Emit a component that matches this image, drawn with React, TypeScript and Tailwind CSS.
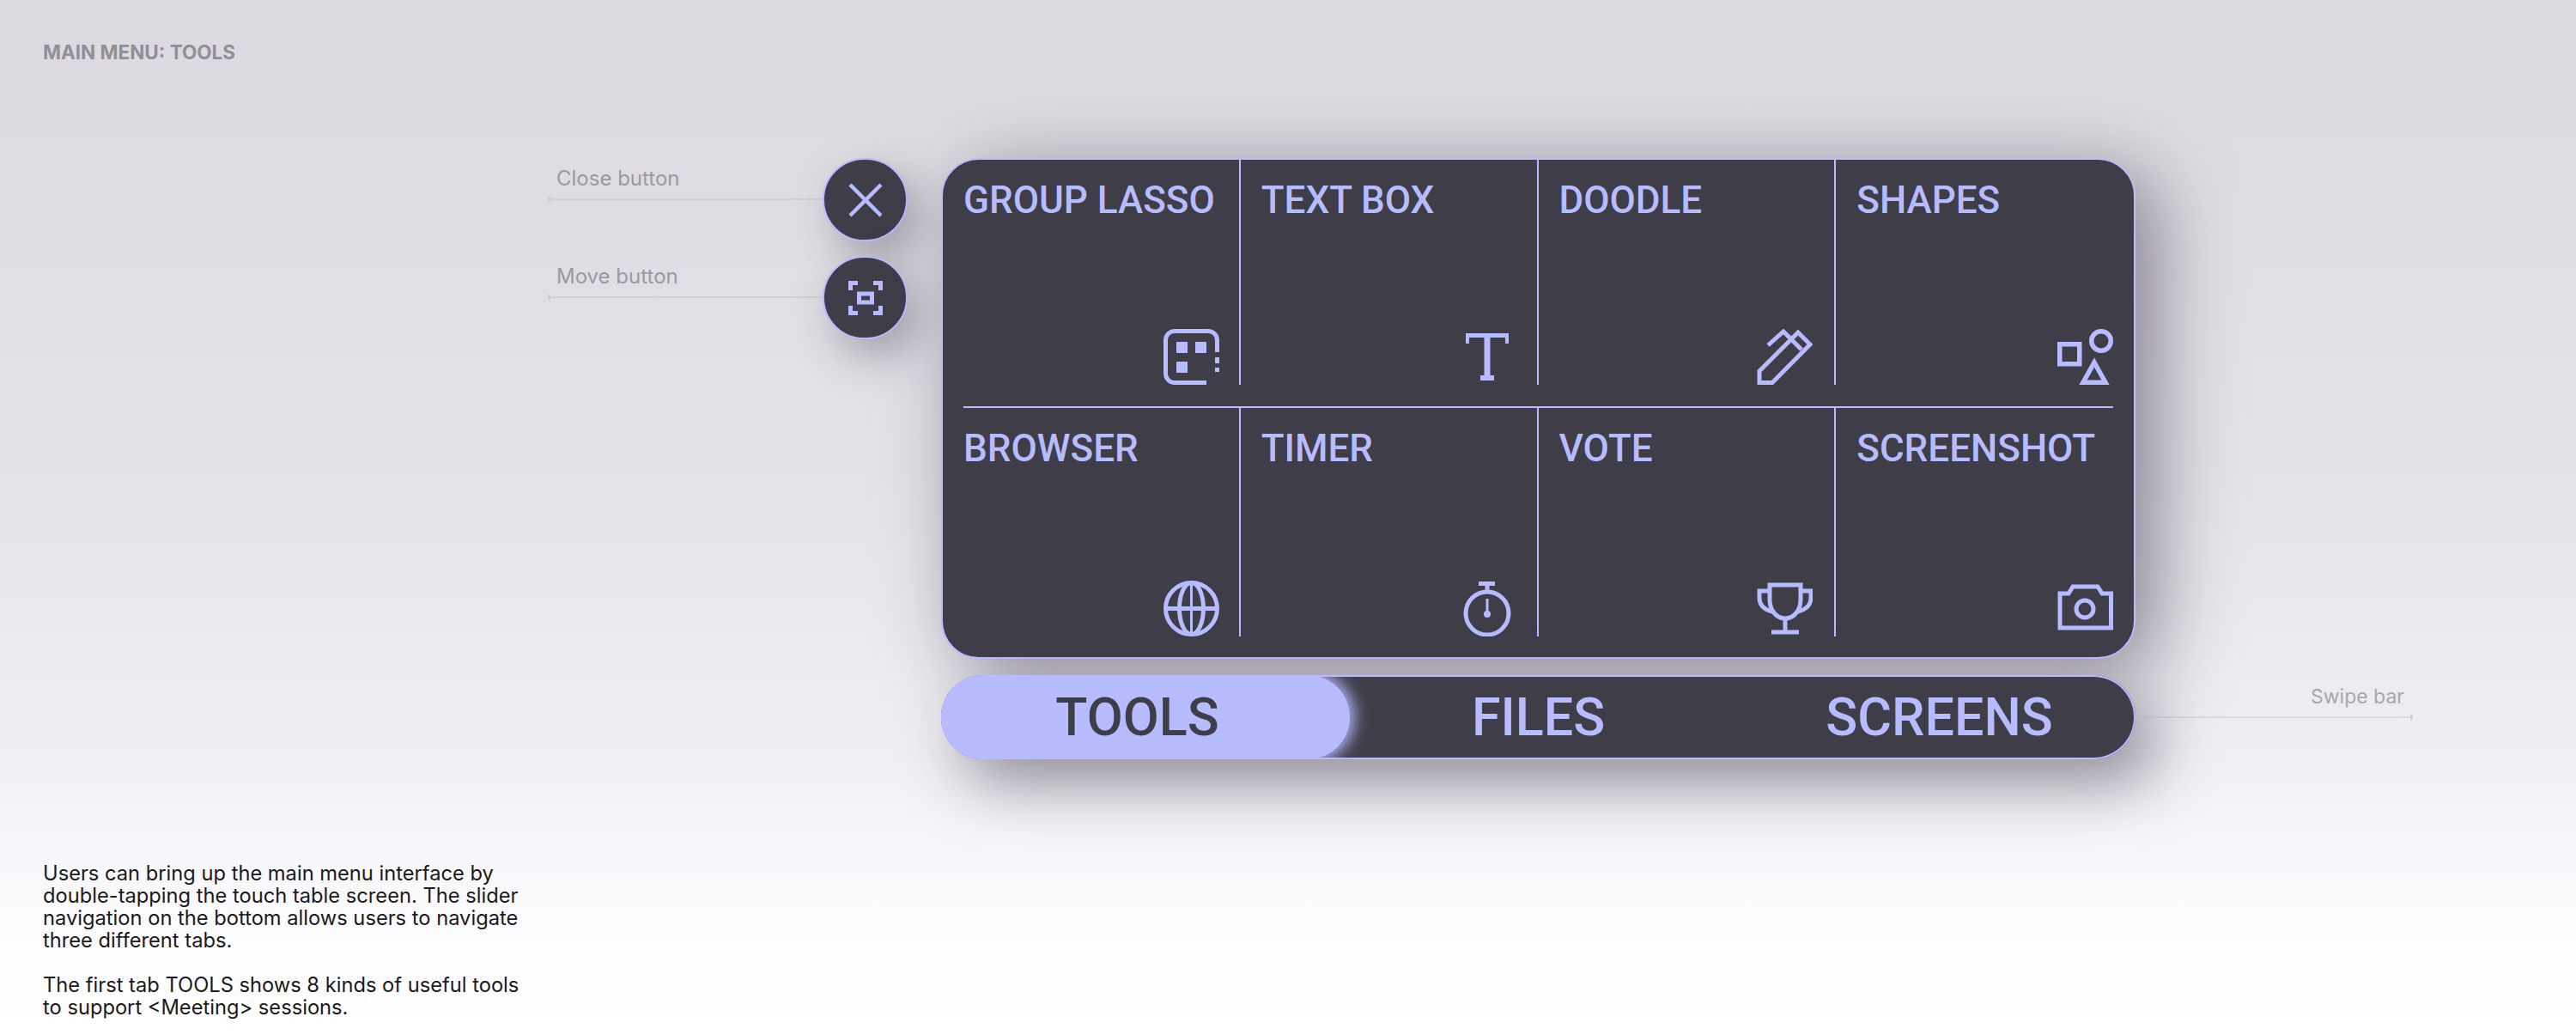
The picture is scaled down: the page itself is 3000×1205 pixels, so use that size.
const LILAC = "#b7bbff"

const LassoIcon = () => (
  <svg width="65" height="65" viewBox="0 0 65 65" fill="none" stroke={LILAC} strokeWidth="5">
    <path d="M50 62.500H13A10.500 10.500 0 0 1 2.500 52V13A10.500 10.500 0 0 1 13 2.500H52A10.500 10.500 0 0 1 62.500 13V27" />
    <g fill={LILAC} stroke="none">
      <rect x="15" y="15" width="13" height="13" />
      <rect x="37" y="15" width="13" height="13" />
      <rect x="15" y="38" width="13" height="13" />
      <rect x="60" y="33" width="5" height="7" />
      <rect x="60" y="45" width="5" height="5" />
    </g>
  </svg>
)

const SerifTIcon = () => (
  <svg width="65" height="65" viewBox="0 0 65 65" fill={LILAC}>
    <path d="M7 5H57V17H53V10H35.500V54H40V60H24V54H28.500V10H11V17H7Z" />
  </svg>
)

const PencilIcon = () => (
  <svg width="65" height="65" viewBox="0 0 65 65" fill="none" stroke={LILAC} strokeWidth="5">
    <path d="M3 62.500V49L41 11L48 4L62 18L18 62.500Z" />
    <path d="M13 19L31 3L52 24" />
  </svg>
)

const ShapesIcon = () => (
  <svg width="65" height="65" viewBox="0 0 65 65" fill="none" stroke={LILAC} strokeWidth="5.500">
    <rect x="2.750" y="17.750" width="23" height="23" />
    <circle cx="51" cy="14" r="11.250" />
    <path d="M43 39L56 62.250H30Z" />
  </svg>
)

const GlobeIcon = () => (
  <svg width="65" height="65" viewBox="0 0 65 65" fill="none" stroke={LILAC} strokeWidth="5">
    <circle cx="32.500" cy="32.500" r="30" />
    <ellipse cx="32.500" cy="32.500" rx="14" ry="30" />
    <path d="M3 32.500H62" />
    <path d="M32.500 3V62" strokeWidth="3" />
  </svg>
)

const StopwatchIcon = () => (
  <svg width="65" height="65" viewBox="0 0 65 65" fill="none" stroke={LILAC} strokeWidth="5">
    <circle cx="32" cy="38" r="25" />
    <path d="M22 3.500H41M32 3V13" />
    <path d="M32 21V40" strokeWidth="3" />
    <circle cx="32" cy="39" r="4" fill={LILAC} stroke="none" />
  </svg>
)

const TrophyIcon = () => (
  <svg width="65" height="65" viewBox="0 0 65 65" fill="none" stroke={LILAC} strokeWidth="5">
    <path d="M15 5H51V22C51 36 42 44 33 44C24 44 15 36 15 22Z" />
    <path d="M15 12H3V20C3 30 10 34 18 36M51 12H63V20C63 30 56 34 48 36" />
    <path d="M33 44V60M17 60H49" />
  </svg>
)

const CameraIcon = () => (
  <svg width="65" height="65" viewBox="0 0 65 65" fill="none" stroke={LILAC} strokeWidth="5">
    <path d="M3 55V15H13L18 7H47L52 15H62.500V55Z" />
    <circle cx="32" cy="33" r="10" />
  </svg>
)

const topRow = [
  { label: "GROUP LASSO", icon: <LassoIcon /> },
  { label: "TEXT BOX", icon: <SerifTIcon /> },
  { label: "DOODLE", icon: <PencilIcon /> },
  { label: "SHAPES", icon: <ShapesIcon /> },
]

const bottomRow = [
  { label: "BROWSER", icon: <GlobeIcon /> },
  { label: "TIMER", icon: <StopwatchIcon /> },
  { label: "VOTE", icon: <TrophyIcon /> },
  { label: "SCREENSHOT", icon: <CameraIcon /> },
]

const cellEdges = [
  "pr-[23px] border-r-2 border-[#b7bbff]",
  "pr-[25px] border-r-2 border-[#b7bbff]",
  "pr-[25px] border-r-2 border-[#b7bbff]",
  "pr-[24px]",
]

const ToolRow = ({ items, className }: { items: typeof topRow; className: string }) => (
  <div className={`grid grid-cols-4 ${className}`}>
    {items.map((tool, i) => (
      <div key={tool.label} className={`flex flex-col justify-between pl-[24px] ${cellEdges[i]}`}>
        <div className="pt-[22px] text-[44px] leading-[50px] font-medium text-[#b7bbff] whitespace-nowrap font-['Roboto',sans-serif]">
          {tool.label}
        </div>
        <div className="flex justify-end">{tool.icon}</div>
      </div>
    ))}
  </div>
)

const Callout = ({ label }: { label: string }) => (
  <div>
    <div className="pl-[10px] text-[24px] leading-[30px] text-[#9c9aa1]">{label}</div>
    <div className="mt-[6px] flex items-center">
      <div className="w-[3px] h-[6px] bg-[#cfcdd3]" />
      <div className="flex-1 h-[2px] bg-[#d3d1d6]" />
    </div>
  </div>
)

const RoundButton = ({ children }: { children: React.ReactNode }) => (
  <div className="w-[99px] h-[97px] rounded-full bg-[#3e3d48] border-2 border-[#b7bbff] flex items-center justify-center shadow-[14px_20px_50px_rgba(70,62,80,0.4)]">
    {children}
  </div>
)

export default function App() {
  return (
    <div className="w-[3000px] h-[1205px] overflow-hidden bg-[linear-gradient(180deg,#dcdae0_0%,#e4e2e8_45%,#efeef3_72%,#fbfafd_88%,#ffffff_100%)] font-['Inter',sans-serif]">
      <div className="pl-[50px] pt-[46px] text-[22.500px] leading-[30px] font-bold text-[#918f97]">MAIN MENU: TOOLS</div>

      <div className="mt-[108px] ml-[638px] flex items-start">
        <div className="w-[320px] flex flex-col">
          <div className="pt-[9px] h-[114px]">
            <Callout label="Close button" />
          </div>
          <div className="pt-[9px]">
            <Callout label="Move button" />
          </div>
        </div>

        <div className="w-[99px] flex flex-col gap-[17px]">
          <RoundButton>
            <svg width="40" height="40" viewBox="0 0 40 40" stroke={LILAC} strokeWidth="4.500">
              <path d="M2 2L38 38M38 2L2 38" />
            </svg>
          </RoundButton>
          <RoundButton>
            <svg width="40" height="40" viewBox="0 0 40 40" fill="none" stroke={LILAC} strokeWidth="5">
              <path d="M2.500 11V2.500H11M29 2.500H37.500V11M2.500 29V37.500H11M29 37.500H37.500V29" />
              <rect x="12.500" y="15" width="15" height="10" />
            </svg>
          </RoundButton>
        </div>

        <div className="ml-[39px] w-[1391px] flex flex-col gap-[19px]">
          <div className="h-[583px] rounded-[44px] bg-[#3e3d48] border-2 border-[#b7bbff] shadow-[24px_18px_90px_rgba(70,62,80,0.58)]">
            <ToolRow items={topRow} className="h-[262px]" />
            <div className="mx-[24px] mt-[25px] h-[2px] bg-[#b7bbff]" />
            <ToolRow items={bottomRow} className="h-[266px]" />
          </div>

          <div className="relative h-[98px] rounded-[49px] bg-[#3e3d48] overflow-hidden shadow-[inset_0_0_0_2px_#b7bbff,24px_28px_70px_rgba(70,62,80,0.55)]">
            <div className="absolute left-0 top-0 bottom-0 w-[476px] rounded-[49px] bg-[#b7bbff] shadow-[0_0_18px_5px_#b7bbff]" />
            <div className="relative h-full pt-[2px] flex justify-center text-[61px] font-medium font-['Roboto',sans-serif]">
              {["TOOLS", "FILES", "SCREENS"].map((tab, i) => (
                <div key={tab} className={`w-[467px] shrink-0 flex items-center justify-center ${i === 0 ? "text-[#3e3d48]" : "text-[#b7bbff]"}`}>
                  {tab}
                </div>
              ))}
            </div>
          </div>
        </div>

        <div className="ml-[10px] w-[313px] pt-[612px]">
          <div className="text-right pr-[10px] text-[23px] leading-[30px] text-[#a9a7ae]">Swipe bar</div>
          <div className="mt-[6px] flex items-center">
            <div className="flex-1 h-[2px] bg-[#dddbe0]" />
            <div className="w-[3px] h-[6px] bg-[#d3d1d6]" />
          </div>
        </div>
      </div>

      <div className="mt-[120px] ml-[50px] w-[562px] text-[23.700px] leading-[26px] text-[#1b1a20]">
        <p>Users can bring up the main menu interface by double-tapping the touch table screen. The slider navigation on the bottom allows users to navigate three different tabs.</p>
        <p className="mt-[26px]">The first tab TOOLS shows 8 kinds of useful tools to support &lt;Meeting&gt; sessions.</p>
      </div>
    </div>
  )
}
